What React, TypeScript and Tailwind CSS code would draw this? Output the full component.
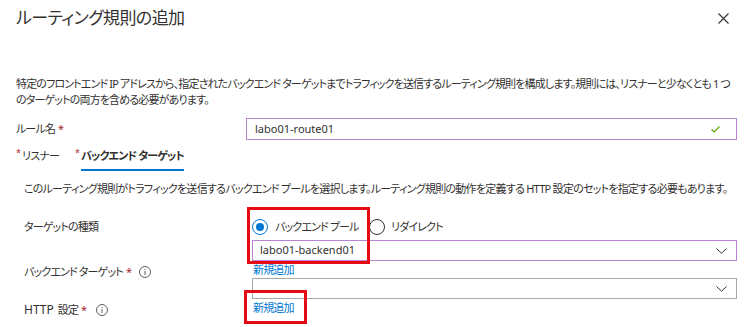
const font = "font-['Noto_Sans','Noto_Sans_CJK_JP',sans-serif] [font-feature-settings:'palt']";

function Chevron() {
  return (
    <svg width="11" height="6" viewBox="0 0 11 6" className="shrink-0">
      <path d="M0.5 0.5 L5.5 5.2 L10.5 0.5" fill="none" stroke="#323130" strokeWidth="1" />
    </svg>
  );
}

function InfoIcon() {
  return (
    <svg width="12" height="12" viewBox="0 0 12 12" className="shrink-0">
      <circle cx="6" cy="6" r="5.5" fill="none" stroke="#605e5c" strokeWidth="1" />
      <rect x="5.5" y="5" width="1" height="4" fill="#605e5c" />
      <rect x="5.5" y="3" width="1" height="1" fill="#605e5c" />
    </svg>
  );
}

function Req() {
  return <span className="ml-[3px] text-[#a4262c]">*</span>;
}

function Star() {
  return <span className="mt-[-1px] text-[9px] leading-[12px] text-[#a4262c]">*</span>;
}

export default function App() {
  return (
    <div className={`relative h-[327px] w-[750px] overflow-hidden bg-white text-[#323130] ${font}`}>
      <div className="flex items-start justify-between pl-4 pr-[21px] pt-[6px]">
        <h1 className="text-[17px] leading-[24px] font-normal tracking-[-0.6px]">ルーティング規則の追加</h1>
        <svg width="11" height="11" viewBox="0 0 11 11" className="mt-[7px]">
          <path d="M0.5 0.5 L10.5 10.5 M10.5 0.5 L0.5 10.5" stroke="#323130" strokeWidth="1.1" />
        </svg>
      </div>

      <p className="mt-[46px] pl-4 pr-[12px] text-[11px] leading-[16px] tracking-[-0.85px]">
        特定のフロントエンド IP アドレスから、指定されたバックエンド ターゲットまでトラフィックを送信するルーティング規則を構成します。規則には、リスナーと少なくとも 1 つのターゲットの両方を含める必要があります。
      </p>

      <div className="mt-[10px] flex items-center pl-4 pr-[13px]">
        <div className="flex w-[230px] text-[11px] leading-[16px] tracking-[-0.85px]">
          ルール名<Req />
        </div>
        <div className="flex h-[22px] flex-1 items-center justify-between border border-[#b884d4] pl-[8px] pr-[16px] text-[11px]">
          <span>labo01-route01</span>
          <svg width="9" height="7" viewBox="0 0 9 7">
            <path d="M0.5 3.5 L3.2 6 L8.5 0.5" fill="none" stroke="#57a300" strokeWidth="1.1" />
          </svg>
        </div>
      </div>

      <div className="mt-[8px] flex items-start pl-4 text-[11px] leading-[16px] tracking-[-0.85px]">
        <div className="flex items-start">
          <Star />
          <span className="ml-[2px]">リスナー</span>
        </div>
        <div className="ml-[16px] flex items-start">
          <Star />
          <div className="ml-[2px] border-b-2 border-[#0078d4] pb-[5px] font-bold">バックエンド&nbsp;ターゲット</div>
        </div>
      </div>

      <div className="pl-6 pr-[13px]">
        <p className="mt-[10px] text-[11px] leading-[16px] tracking-[-0.74px]">
          このルーティング規則がトラフィックを送信するバックエンド プールを選択します。ルーティング規則の動作を定義する HTTP 設定のセットを指定する必要もあります。
        </p>

        <div className="mt-[22px] flex">
          <div className="flex w-[228px] flex-col text-[11px] leading-[16px] tracking-[-0.85px]">
            <div>ターゲットの種類</div>
            <div className="mt-[29px] flex items-center gap-[8px]">
              <span className="flex">
                バックエンド&nbsp;ターゲット<Req />
              </span>
              <InfoIcon />
            </div>
            <div className="mt-[22px] flex items-center gap-[10px]">
              <span className="flex items-baseline">
                <span className="text-[12px] tracking-normal">HTTP</span>
                <span className="ml-[4px]">設定</span>
                <Req />
              </span>
              <InfoIcon />
            </div>
          </div>

          <div className="flex flex-1 flex-col text-[11px]">
            <div className="flex h-[16px] items-center">
              <span className="flex h-[16px] w-[16px] shrink-0 items-center justify-center rounded-full border border-[#0078d4]">
                <span className="h-[8px] w-[8px] rounded-full bg-[#0078d4]" />
              </span>
              <span className="ml-[7px] w-[87px] leading-[16px] tracking-[-0.85px]">バックエンド&nbsp;プール</span>
              <span className="ml-[7px] h-[16px] w-[16px] shrink-0 rounded-full border border-[#323130]" />
              <span className="ml-[6px] leading-[16px] tracking-[-0.85px]">リダイレクト</span>
            </div>
            <div className="mt-[5px] flex h-[21px] items-center justify-between border border-[#b884d4] pl-[7px] pr-[9px]">
              <span>labo01-backend01</span>
              <Chevron />
            </div>
            <a className="ml-[1px] leading-[17px] tracking-[-0.85px] text-[#0078d4]">新規追加</a>
            <div className="flex h-[21px] items-center justify-end border border-[#a8a8a8] pr-[9px]">
              <Chevron />
            </div>
            <a className="ml-[1px] leading-[17px] tracking-[-0.85px] text-[#0078d4]">新規追加</a>
          </div>
        </div>
      </div>

      <div className="absolute left-[247px] top-[207px] h-[57px] w-[123px] border-[3px] border-[#e60a14]" />
      <div className="absolute left-[244px] top-[290px] h-[34px] w-[63px] border-[3px] border-[#e60a14]" />
    </div>
  );
}
